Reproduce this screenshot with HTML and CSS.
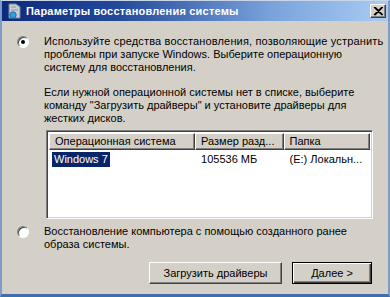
FILE: index.html
```html
<!DOCTYPE html>
<html lang="ru">
<head>
    <meta charset="UTF-8">
    <title>Параметры восстановления системы</title>
    <link rel="stylesheet" href="styles.css">
</head>
<body>
    <div class="window">
        <div class="titlebar">
            <span class="app-icon">
                <svg width="13" height="16" viewBox="0 0 13 16">
                    <path d="M1 1 L8 1 L12 4 L12 15 L1 15 Z" fill="#c9cdd6" stroke="#7d8595"/>
                    <path d="M3 4 L8 4 M3 7 L10 7" stroke="#8e96a6"/>
                    <circle cx="5" cy="12" r="3.2" fill="#2fa3d9" stroke="#1c6fa8"/>
                </svg>
            </span>
            <span class="title">Параметры восстановления системы</span>
            <span class="close">
                <svg width="10" height="9" viewBox="0 0 10 9">
                    <path d="M1 0 L9 8 M2 0 L10 8 M9 0 L1 8 M10 0 L2 8" stroke="#000" stroke-width="1"/>
                </svg>
            </span>
        </div>

        <div class="content">
            <div class="option">
                <span class="radio checked"></span>
                <div class="option-text">
                    <p><span class="wide">Используйте средства восстановления, позволяющие устранить</span><br>
                       проблемы при запуске Windows. Выберите операционную<br>
                       систему для восстановления.</p>
                    <p class="gap">Если нужной операционной системы нет в списке, выберите<br>
                       команду "Загрузить драйверы" и установите драйверы для<br>
                       жестких дисков.</p>

                    <div class="listview">
                        <div class="lv-head">
                            <span class="col col-os">Операционная система</span>
                            <span class="col col-size">Размер разд...</span>
                            <span class="col col-dir">Папка</span>
                        </div>
                        <div class="lv-row">
                            <span class="col col-os"><span class="selected">Windows 7</span></span>
                            <span class="col col-size">105536 МБ</span>
                            <span class="col col-dir">(E:) Локальн...</span>
                        </div>
                    </div>
                </div>
            </div>

            <div class="option second">
                <span class="radio"></span>
                <div class="option-text">
                    <p>Восстановление компьютера с помощью созданного ранее<br>
                       образа системы.</p>
                </div>
            </div>

            <div class="buttons">
                <span class="btn btn-load">Загрузить драйверы</span>
                <span class="btn btn-next">Далее &gt;</span>
            </div>
        </div>
    </div>
</body>
</html>
```

FILE: styles.css
```css
*{
    box-sizing: border-box;
}
body{
    margin: 0;
    background: #4a72b0;
    font-family: "Liberation Sans", Arial, sans-serif;
    font-size: 11px;
    color: #000;
}
.window{
    width: 390px;
    height: 297px;
    display: flex;
    flex-direction: column;
    background: #d4d0c8;
    border-left: 2px solid #7f9cc9;
    border-right: 2px solid #7f9cc9;
    border-bottom: 3px solid #3f6db0;
    border-top: 1px solid #c9d6ea;
    overflow: hidden;
}
.titlebar{
    height: 20px;
    flex-shrink: 0;
    margin: 0 0 1px 0;
    display: flex;
    align-items: center;
    padding: 0 2px 0 6px;
    background: linear-gradient(to right, #0c2a7c, #24499a 30%, #7aa3dc 70%, #a9ccf2);
}
.app-icon{
    width: 13px;
    height: 16px;
    flex-shrink: 0;
    display: flex;
}
.title{
    margin-left: 5px;
    color: #fff;
    font-weight: 700;
    font-size: 11px;
    letter-spacing: 0.2px;
    flex: 1;
}
.close{
    width: 16px;
    height: 14px;
    flex-shrink: 0;
    display: flex;
    justify-content: center;
    align-items: center;
    background: #d4d0c8;
    border: 1px solid;
    border-color: #fff #404040 #404040 #fff;
    box-shadow: inset -1px -1px #808080;
}
.close svg path{
    stroke-width: 1.2;
}
.content{
    flex: 1;
    padding: 13px 15px 0 15px;
}
.option{
    display: flex;
    align-items: flex-start;
}
.option.second{
    margin-top: 6px;
}
.option-text{
    margin-left: 15px;
    flex: 1;
    min-width: 0;
}
p{
    margin: 0;
    line-height: 13px;
    white-space: nowrap;
}
p.gap{
    margin-top: 12px;
}
.wide{
    letter-spacing: 0.15px;
}
.radio{
    width: 12px;
    height: 12px;
    flex-shrink: 0;
    margin-top: 1px;
    border-radius: 50%;
    border: 1px solid;
    border-color: #808080 #fff #fff #808080;
    background: #fff;
    box-shadow: inset 1px 1px #404040;
    display: flex;
    justify-content: center;
    align-items: center;
}
.radio.checked::after{
    content: "";
    width: 4px;
    height: 4px;
    border-radius: 50%;
    background: #000;
}
.listview{
    margin: 5px 0 0 2px;
    width: 327px;
    height: 89px;
    background: #fff;
    border: 1px solid;
    border-color: #808080 #fff #fff #808080;
    box-shadow: inset 1px 1px #404040, inset -1px -1px #d4d0c8;
    padding: 2px;
}
.lv-head, .lv-row{
    display: flex;
}
.lv-head .col{
    height: 17px;
    line-height: 15px;
    padding-left: 5px;
    background: #d4d0c8;
    border: 1px solid;
    border-color: #fff #404040 #404040 #fff;
    box-shadow: inset -1px -1px #808080;
    white-space: nowrap;
    overflow: hidden;
}
.col-os{ width: 147px; }
.col-size{ width: 89px; }
.col-dir{ width: 87px; }
.lv-row{
    margin-top: 2px;
}
.lv-row .col{
    height: 15px;
    line-height: 15px;
    padding-left: 6px;
    white-space: nowrap;
}
.lv-row .col-os{
    padding-left: 3px;
}
.selected{
    display: inline-block;
    padding: 0 2px;
    background: #0a246a;
    color: #fff;
}
.buttons{
    display: flex;
    justify-content: flex-end;
    gap: 10px;
    margin-top: 11px;
    padding-right: 1px;
}
.btn{
    height: 22px;
    display: flex;
    justify-content: center;
    align-items: center;
    background: #d4d0c8;
    border: 1px solid;
    border-color: #fff #404040 #404040 #fff;
    box-shadow: inset -1px -1px #808080;
}
.btn-load{
    width: 133px;
}
.btn-next{
    width: 80px;
    border: 1px solid #000;
    box-shadow: inset 1px 1px #fff, inset -1px -1px #404040, inset -2px -2px #808080;
}
```
